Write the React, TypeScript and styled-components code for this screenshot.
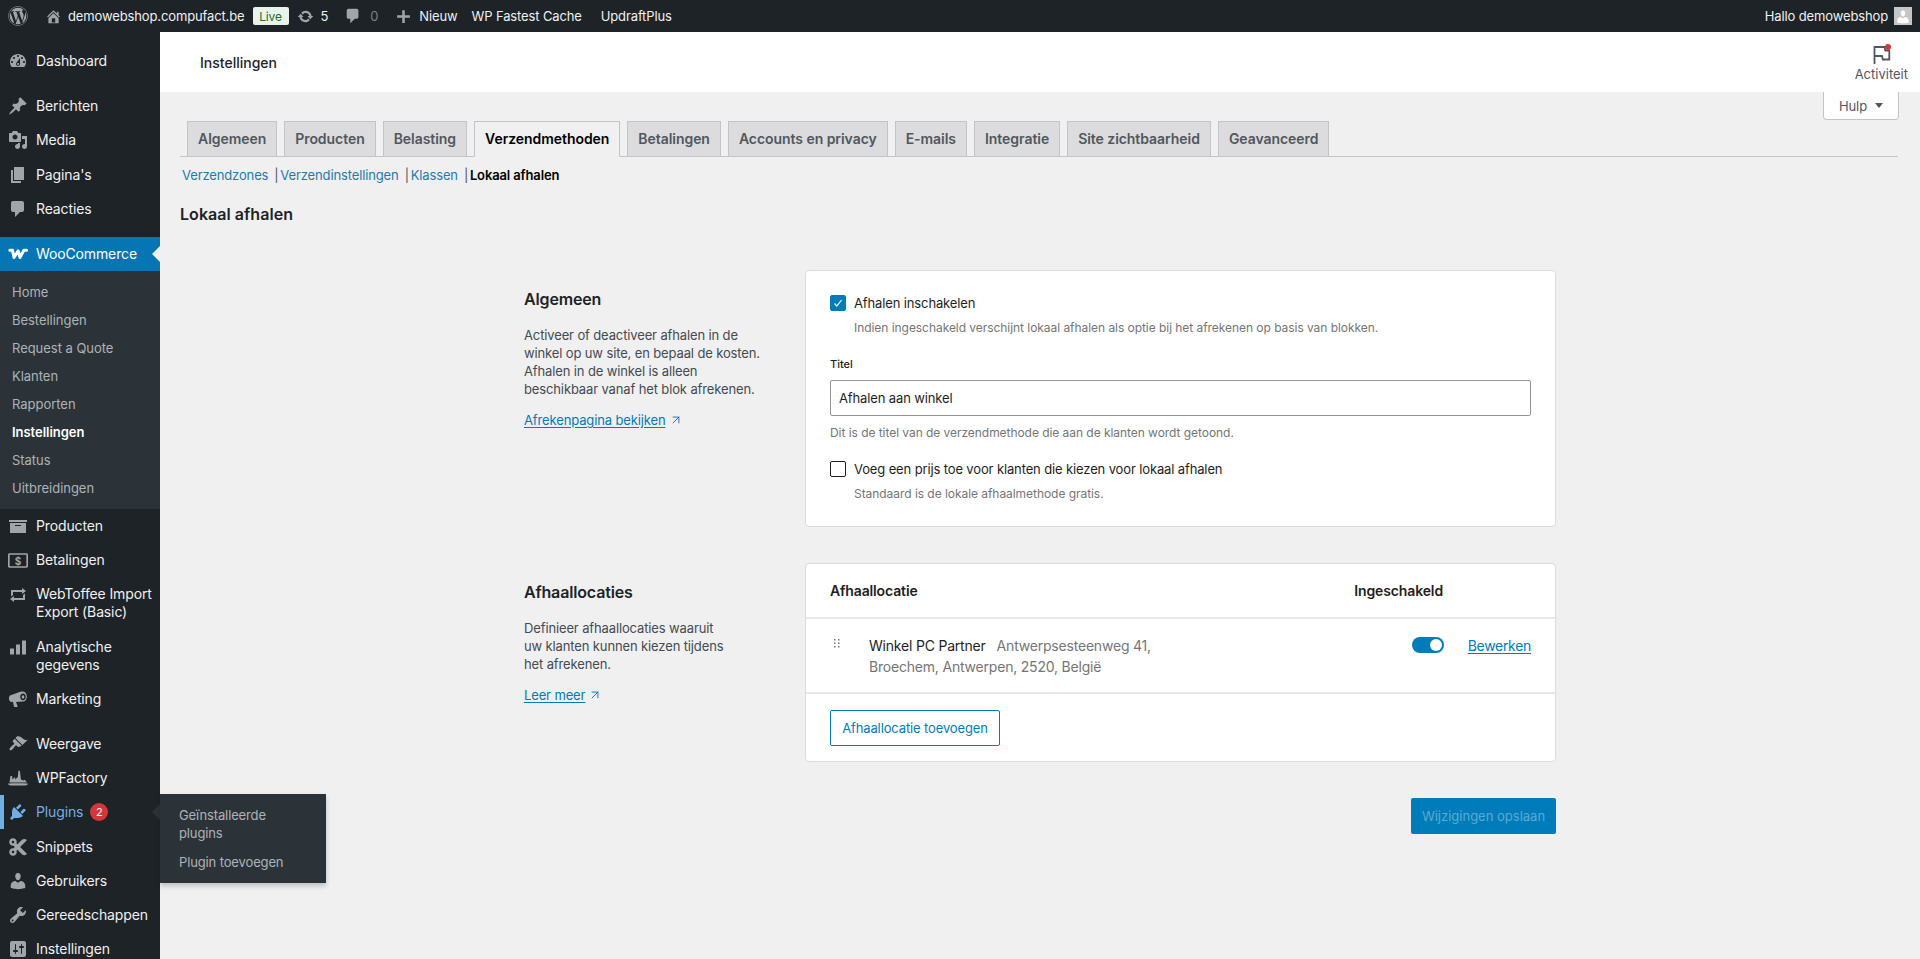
import { ReactNode } from "react";
import styled, { createGlobalStyle } from "styled-components";
import { FaWordpress, FaCut } from "react-icons/fa";
import { ArrowUpRight } from "lucide-react";

const GlobalStyle = createGlobalStyle`
  html, body {
    margin: 0;
    padding: 0;
    height: 100%;
    overflow: hidden;
    background: #f0f0f1;
  }
  body {
    font-family: Inter, "Liberation Sans", sans-serif;
    font-size: 13px;
    letter-spacing: -0.13px;
    color: #1d2327;
  }
  * { box-sizing: border-box; }
`;

const paths: Record<string, ReactNode> = {
  dashboard: (
    <path d="M3.76 16h12.48c1.1-1.37 1.76-3.11 1.76-5 0-4.42-3.58-8-8-8s-8 3.58-8 8c0 1.89.66 3.63 1.76 5zM10 4c.55 0 1 .45 1 1s-.45 1-1 1-1-.45-1-1 .45-1 1-1zM6 6c.55 0 1 .45 1 1s-.45 1-1 1-1-.45-1-1 .45-1 1-1zm8 0c.55 0 1 .45 1 1s-.45 1-1 1-1-.45-1-1 .45-1 1-1zm-5.37 5.55L12 7v6c0 1.1-.9 2-2 2s-2-.9-2-2c0-.57.24-1.08.63-1.45zM4 10c.55 0 1 .45 1 1s-.45 1-1 1-1-.45-1-1 .45-1 1-1zm12 0c.55 0 1 .45 1 1s-.45 1-1 1-1-.45-1-1 .45-1 1-1zm-5 3c0-.55-.45-1-1-1s-1 .45-1 1 .45 1 1 1 1-.45 1-1z" />
  ),
  post: (
    <path d="M10.44 3.02l1.82-1.82 6.36 6.35-1.83 1.82c-1.05-.68-2.48-.57-3.41.36l-.75.75c-.92.93-1.04 2.35-.35 3.41l-1.83 1.82-2.41-2.41-2.8 2.79c-.42.42-3.38 2.71-3.8 2.29s1.86-3.39 2.28-3.81l2.79-2.79L4.1 9.36l1.83-1.82c1.05.69 2.48.57 3.4-.36l.75-.75c.93-.92 1.05-2.35.36-3.41z" />
  ),
  media: (
    <path d="M13 11V4c0-.55-.45-1-1-1h-1.67L9 1H5L3.67 3H2c-.55 0-1 .45-1 1v7c0 .55.45 1 1 1h10c.55 0 1-.45 1-1zM7 4.5c1.38 0 2.5 1.12 2.5 2.5S8.38 9.5 7 9.5 4.5 8.38 4.5 7 5.62 4.5 7 4.5zM14 6h5v10.5c0 1.38-1.12 2.5-2.5 2.5S14 17.88 14 16.5s1.12-2.5 2.5-2.5c.17 0 .34.02.5.05V9h-3V6zm-4 8.05V13h2v3.5c0 1.38-1.12 2.5-2.5 2.5S7 17.88 7 16.5 8.12 14 9.5 14c.17 0 .34.02.5.05z" />
  ),
  page: <path d="M6 15V2h10v13H6zm-1 1h8v2H3V5h2v11z" />,
  comment: (
    <path d="M5 2h9c1.1 0 2 .9 2 2v7c0 1.1-.9 2-2 2h-2l-5 5v-5H5c-1.1 0-2-.9-2-2V4c0-1.1.9-2 2-2z" />
  ),
  archive: <path d="M19 4v2H1V4h18zM2 7h16v10H2V7zm11 3V9H7v1h6z" />,
  money: (
    <>
      <rect x="0.8" y="4" width="18.4" height="13" rx="1" fill="none" stroke="currentColor" strokeWidth="1.7" />
      <text x="10" y="14.500" textAnchor="middle" fontSize="10" fontWeight="700" fontFamily="Inter, sans-serif">
        $
      </text>
    </>
  ),
  repeat: (
    <path d="M5 7v3l-2 1.5V5h11V3l4 3.01L14 9V7H5zm10 6v-3l2-1.5V15H6v2l-4-3.01L6 11v2h9z" />
  ),
  chart: <path d="M18 2.5v14h-4v-14h4zm-6 4v10H8v-10h4zm-6 4v6H2v-6h4z" />,
  megaphone: (
    <path d="M13.6 2.6c2.7-.7 5 1.4 5.2 4.6.2 2.9-1.6 5.3-4 5.4l-6.8.3 1.6 4.3c.1.4-.1.7-.5.7H6.6c-.4 0-.6-.2-.7-.6l-.9-4.5-1.3.1C2 12.9.9 11.400.9 9.500c0-1.900 1-3.300 2.500-3.500l8.100-3zM15 4.600c-1.600 0-2.800 1.500-2.800 3.400s1.200 3.200 2.800 3.200 2.800-1.400 2.800-3.300-1.200-3.300-2.800-3.300zm0 1.700c.8 0 1.300.8 1.300 1.700s-.5 1.600-1.300 1.600-1.300-.7-1.300-1.600.5-1.700 1.300-1.700z" />
  ),
  brush: (
    <path d="M14.48 11.06L7.41 3.99l1.5-1.5c.5-.56 2.3-.47 3.51.32 1.21.8 1.43 1.28 2.91 2.1 1.18.64 2.45 1.26 4.45.85zm-.71.71L6.7 4.7 4.93 6.47c-.39.39-.39 1.02 0 1.41l1.06 1.06c.39.39.39 1.03 0 1.42-.6.6-1.43 1.11-2.21 1.69-.35.26-.7.53-1.01.84-1.43 1.43-1.4 2.52-.99 3.01.49.41 1.58.44 3.01-.99.31-.31.58-.66.84-1.01.58-.78 1.09-1.61 1.69-2.21.39-.39 1.03-.39 1.42 0l1.06 1.06c.39.39 1.02.39 1.41 0z" />
  ),
  factory: (
    <path d="M0 15.600c3-.6 17-.6 20 0-.3 1.400-1.500 1.900-2.500 1.900h-15c-1 0-2.200-.5-2.500-1.900zM1.500 14.600l.9-6.600h1.700l.4 3.300 2.700-2.200v2.300l2.600-2.300.6-6.300h1.500l1 8.600 2.600 1.100 1.300-.7 2.200 2.800z" />
  ),
  plugin: (
    <path d="M13.11 4.360L9.870 7.600 8 5.730l3.240-3.240c.35-.34 1.050-.2 1.560.32.52.51.66 1.210.31 1.550zm-8 1.770l.91-1.120 9.010 9.010-1.190.84c-.71.71-2.630 1.160-3.820 1.160H6.140L4.900 17.260c-.59.59-1.540.59-2.120 0-.59-.58-.59-1.530 0-2.120l1.240-1.240v-3.880c0-1.130.4-3.190 1.090-3.890zm7.260 3.970l3.240-3.240c.34-.35 1.040-.21 1.550.31.52.51.66 1.210.31 1.550l-3.240 3.250z" />
  ),
  users: (
    <path d="M10 9.250c-2.270 0-2.730-3.440-2.730-3.440C7 4.020 7.820 2 9.970 2c2.160 0 2.980 2.020 2.710 3.810 0 0-.41 3.440-2.680 3.440zm0 2.570L12.720 10c2.390 0 4.520 2.330 4.520 4.530v2.490s-3.650 1.130-7.240 1.130c-3.650 0-7.240-1.130-7.240-1.130v-2.490c0-2.250 1.940-4.480 4.470-4.480z" />
  ),
  tools: (
    <path d="M16.680 9.770c-1.340 1.340-3.300 1.670-4.950.99l-5.410 6.520c-.99.99-2.590.99-3.580 0s-.99-2.590 0-3.570l6.520-5.420c-.68-1.650-.35-3.610.99-4.950 1.280-1.280 3.120-1.620 4.720-1.060l-2.890 2.890 2.820 2.820 2.860-2.870c.53 1.580.18 3.390-1.080 4.650zM3.810 16.210c.4.39 1.040.39 1.430 0 .4-.4.4-1.040 0-1.430-.39-.4-1.030-.4-1.430 0-.39.39-.39 1.030 0 1.430z" />
  ),
  settings: (
    <path d="M18 16V4c0-1.100-.9-2-2-2H4c-1.100 0-2 .9-2 2v12c0 1.100.9 2 2 2h12c1.100 0 2-.9 2-2zM8 11h1c.55 0 1 .45 1 1s-.45 1-1 1H8v1.500c0 .28-.22.5-.5.5s-.5-.22-.5-.5V13H6c-.55 0-1-.45-1-1s.45-1 1-1h1V5.500c0-.28.22-.5.5-.5s.5.22.5.5V11zm5-2h-1c-.55 0-1-.45-1-1s.45-1 1-1h1V5.500c0-.28.22-.5.5-.5s.5.22.5.5V7h1c.55 0 1 .45 1 1s-.45 1-1 1h-1v5.500c0 .28-.22.5-.5.5s-.5-.22-.5-.5V9z" />
  ),
  home: (
    <path d="M16 8.500l1.530 1.530-1.060 1.060L10 4.620l-6.470 6.470-1.060-1.060L10 2.500l4 4v-2h2v4zm-6-2.460l6 5.990V18H4v-5.970zM12 17v-5H8v5h4z" />
  ),
  update: (
    <path d="M10.200 3.280c3.530 0 6.430 2.610 6.920 6h2.080l-3.500 4-3.500-4h2.320c-.45-1.970-2.210-3.450-4.320-3.450-1.450 0-2.730.71-3.540 1.780L4.950 5.660C6.230 4.200 8.110 3.280 10.200 3.280zm-.4 13.440c-3.520 0-6.430-2.610-6.920-6H.8l3.500-4c1.170 1.330 2.330 2.670 3.500 4H5.480c.45 1.970 2.210 3.450 4.320 3.450 1.450 0 2.730-.71 3.540-1.780l1.710 1.950c-1.280 1.460-3.150 2.380-5.250 2.380z" />
  ),
  plus: <path d="M17.500 8.500v3h-6v6h-3v-6h-6v-3h6v-6h3v6h6z" />,
  woo: (
    <path
      d="M1.800 6.300h2.700l1.500 7.200 4.200-6.600 1.700 6.600 4-7.200h2.600"
      fill="none"
      stroke="currentColor"
      strokeWidth="3"
      strokeLinejoin="round"
      strokeLinecap="round"
    />
  ),
};

const Icon = styled.svg.attrs({ viewBox: "0 0 20 20" })<{ $size?: number }>`
  width: ${(p) => p.$size ?? 20}px;
  height: ${(p) => p.$size ?? 20}px;
  fill: currentColor;
  flex-shrink: 0;
`;

/* admin bar */

const Shell = styled.div`
  height: 100vh;
  display: flex;
  flex-direction: column;
  overflow: hidden;
`;

const AdminBar = styled.header`
  height: 32px;
  flex-shrink: 0;
  background: #1d2327;
  color: #f0f0f1;
  display: flex;
  align-items: center;
  padding: 0 8px;
  font-size: 13px;
  z-index: 3;
`;

const BarIcon = styled.span<{ $left: number }>`
  display: flex;
  color: #a0a5aa;
  margin-left: ${(p) => p.$left}px;
`;

const BarText = styled.span<{ $left: number; $dim?: boolean }>`
  margin-left: ${(p) => p.$left}px;
  color: ${(p) => (p.$dim ? "#7b8085" : "#f0f0f1")};
  white-space: nowrap;
`;

const LiveBadge = styled.span`
  margin-left: 8px;
  width: 36px;
  height: 18px;
  display: flex;
  align-items: center;
  justify-content: center;
  border-radius: 2px;
  background: #e8f3ea;
  color: #1f6b32;
  font-size: 12px;
`;

const BarSpacer = styled.div`
  flex: 1;
`;

const Avatar = styled.span`
  width: 18px;
  height: 18px;
  margin: 0 0 0 6px;
  background: #c4c6c8;
  color: #fff;
  display: flex;
  align-items: flex-end;
  justify-content: center;
`;

/* sidebar */

const Body = styled.div`
  flex: 1;
  display: flex;
  min-height: 0;
`;

const Sidebar = styled.nav`
  width: 160px;
  flex-shrink: 0;
  background: #1d2327;
  padding-top: 12px;
  display: flex;
  flex-direction: column;
  z-index: 2;
`;

const NavRow = styled.div<{ $active?: boolean; $current?: boolean; $gap?: number; $tall?: boolean }>`
  position: relative;
  display: flex;
  align-items: ${(p) => (p.$tall ? "flex-start" : "center")};
  flex-shrink: 0;
  min-height: 34px;
  padding: ${(p) => (p.$tall ? "8px 8px 8.5px 8px" : "0 8px")};
  margin-top: ${(p) => p.$gap ?? 0}px;
  background: ${(p) => (p.$active ? "#0675b4" : "transparent")};
  color: ${(p) => (p.$active ? "#fff" : p.$current ? "#72aee6" : "#f0f0f1")};
  font-size: 14px;
  line-height: 18px;
  box-shadow: ${(p) => (p.$current ? "inset 4px 0 0 #72aee6" : "none")};

  & > svg {
    color: ${(p) => (p.$active ? "#fff" : p.$current ? "#72aee6" : "#a0a5aa")};
  }
`;

const NavLabel = styled.span`
  margin-left: 8px;
`;

const CurrentArrow = styled.span<{ $color: string }>`
  position: absolute;
  right: 0;
  top: 50%;
  margin-top: -8px;
  border: 8px solid transparent;
  border-left-width: 0;
  border-right-color: ${(p) => p.$color};
`;

const CountBadge = styled.span`
  width: 18px;
  height: 18px;
  margin-left: 7px;
  border-radius: 50%;
  background: #d63638;
  color: #fff;
  font-size: 11px;
  line-height: 18px;
  text-align: center;
`;

const SubMenu = styled.div`
  background: #2c3338;
  padding: 7px 0;
  flex-shrink: 0;
`;

const SubItem = styled.div<{ $active?: boolean }>`
  height: 28px;
  padding-left: 12px;
  display: flex;
  align-items: center;
  letter-spacing: -0.03px;
  color: ${(p) => (p.$active ? "#fff" : "rgba(240, 246, 252, 0.66)")};
  font-weight: ${(p) => (p.$active ? 600 : 400)};
`;

const Flyout = styled.div`
  position: absolute;
  left: 160px;
  top: -1px;
  width: 166px;
  padding: 12px 19px;
  display: flex;
  flex-direction: column;
  gap: 11px;
  background: #2c3338;
  font-size: 13px;
  color: rgba(240, 246, 252, 0.66);
  box-shadow: 0 3px 5px rgba(0, 0, 0, 0.2);
`;

/* main */

const Main = styled.main`
  flex: 1;
  min-width: 0;
  display: flex;
  flex-direction: column;
`;

const PageHeader = styled.div`
  height: 60px;
  flex-shrink: 0;
  background: #fff;
  padding: 0 12px 0 40px;
  display: flex;
  align-items: center;
  justify-content: space-between;
`;

const PageTitle = styled.h1`
  margin: 0;
  font-size: 14px;
  font-weight: 500;
  letter-spacing: 0;
  color: #1d2327;
`;

const Activity = styled.div`
  display: flex;
  flex-direction: column;
  align-items: center;
  font-size: 13px;
  line-height: 16px;
  letter-spacing: 0;
  color: #50575e;
`;

const MetaRow = styled.div`
  height: 28px;
  padding-right: 21px;
  display: flex;
  justify-content: flex-end;
`;

const HelpButton = styled.div`
  width: 76px;
  background: #fff;
  border: 1px solid #c3c4c7;
  border-top: 0;
  border-radius: 0 0 4px 4px;
  display: flex;
  align-items: center;
  justify-content: center;
  gap: 8px;
  color: #50575e;
`;

const Caret = styled.span`
  border: 4.5px solid transparent;
  border-top: 5px solid #50575e;
  border-bottom: 0;
`;

const Content = styled.div`
  padding: 1px 20px 0;
`;

const Tabs = styled.div`
  display: flex;
  gap: 7px;
  padding-left: 7px;
  margin-right: 2px;
  border-bottom: 1px solid #c3c4c7;
  height: 36px;
`;

const Tab = styled.div<{ $active?: boolean }>`
  height: 36px;
  padding: 5px 10px;
  border: 1px solid #c3c4c7;
  border-bottom-color: ${(p) => (p.$active ? "#f0f0f1" : "#c3c4c7")};
  background: ${(p) => (p.$active ? "#f0f0f1" : "#dcdcde")};
  color: ${(p) => (p.$active ? "#000" : "#50575e")};
  font-size: 14px;
  font-weight: 600;
  letter-spacing: -0.05px;
  line-height: 24px;
  white-space: nowrap;
`;

const SubNav = styled.div`
  margin: 9px 0 0 2px;
  display: flex;
  align-items: center;
  line-height: 18px;
  color: #50575e;
`;

const SubLink = styled.span`
  color: #1f7ab0;
`;

const Separator = styled.span`
  margin: 0 2px 0 6px;
  color: #50575e;
  width: 4px;
`;

const SubCurrent = styled.span`
  color: #000;
  font-weight: 600;
`;

const Heading = styled.h2`
  margin: 18px 0 0;
  font-size: 16px;
  font-weight: 600;
  letter-spacing: 0.05px;
  line-height: 24px;
  color: #1d2327;
`;

const Center = styled.div`
  width: 1032px;
  margin: 44px 0 0 344px;
  display: flex;
  flex-direction: column;
`;

const Section = styled.section`
  display: grid;
  grid-template-columns: 281px 751px;
  margin-bottom: 36px;
`;

const Intro = styled.div`
  padding-top: 17px;
`;

const IntroTitle = styled.h3`
  margin: 0;
  font-size: 16px;
  font-weight: 600;
  letter-spacing: -0.15px;
  line-height: 24px;
  color: #1d2327;
`;

const IntroText = styled.p`
  margin: 15px 0 13px;
  line-height: 18px;
  color: #444b52;
`;

const ExternalLink = styled.span`
  display: inline-flex;
  align-items: center;
  gap: 3px;
  line-height: 18px;
  color: #007cba;

  & > u {
    text-underline-offset: 2px;
  }
`;

const Card = styled.div`
  background: #fff;
  border: 1px solid #dcdcde;
  border-radius: 4px;
`;

const Form = styled.div`
  padding: 24px 24px 24px;
`;

const CheckRow = styled.div<{ $top?: number }>`
  display: flex;
  align-items: center;
  gap: 8px;
  height: 16px;
  margin-top: ${(p) => p.$top ?? 0}px;
  color: #1e1e1e;
`;

const Box = styled.span<{ $checked?: boolean }>`
  width: 16px;
  height: 16px;
  display: flex;
  border-radius: 2px;
  border: 1px solid ${(p) => (p.$checked ? "#007cba" : "#1e1e1e")};
  background: ${(p) => (p.$checked ? "#007cba" : "#fff")};
`;

const Help = styled.div<{ $indent?: boolean }>`
  margin-top: 9px;
  margin-left: ${(p) => (p.$indent ? "24px" : "0")};
  font-size: 12px;
  letter-spacing: -0.05px;
  line-height: 16px;
  color: #757575;
`;

const FieldLabel = styled.div`
  margin-top: 20px;
  font-size: 11px;
  font-weight: 500;
  letter-spacing: 0;
  line-height: 16px;
  color: #1e1e1e;
`;

const TextInput = styled.div`
  margin-top: 8px;
  height: 36px;
  padding: 0 8px;
  display: flex;
  align-items: center;
  border: 1px solid #949494;
  border-radius: 2px;
  color: #1e1e1e;
`;

const TableHead = styled.div`
  height: 53px;
  padding: 0 112px 0 24px;
  display: flex;
  align-items: center;
  justify-content: space-between;
  font-size: 14px;
  font-weight: 600;
  color: #1e1e1e;
`;

const LocationRow = styled.div`
  height: 77px;
  border-top: 2px solid #e8e8e8;
  border-bottom: 2px solid #e8e8e8;
  padding: 16px 24px 0 28px;
  display: flex;
  align-items: flex-start;
  font-size: 14px;
`;

const Handle = styled.svg`
  width: 6px;
  height: 9px;
  margin-top: 4px;
  flex-shrink: 0;
  fill: #757575;
`;

const LocationText = styled.div`
  margin-left: 29px;
  flex: 1;
  line-height: 21px;
  letter-spacing: -0.2px;
  color: #757575;
`;

const LocationName = styled.span`
  color: #1e1e1e;
  margin-right: 11px;
`;

const Toggle = styled.span`
  width: 32px;
  height: 16px;
  margin-top: 2px;
  padding: 2px;
  border-radius: 8px;
  background: #007cba;
  display: flex;
  justify-content: flex-end;
  flex-shrink: 0;

  &::after {
    content: "";
    width: 12px;
    height: 12px;
    border-radius: 50%;
    background: #fff;
  }
`;

const EditLink = styled.u`
  margin-left: 24px;
  line-height: 21px;
  letter-spacing: -0.3px;
  color: #007cba;
  text-underline-offset: 2px;
`;

const TableFoot = styled.div`
  padding: 16px 24px 15px;
`;

const OutlineButton = styled.div`
  width: 170px;
  height: 36px;
  display: flex;
  align-items: center;
  justify-content: center;
  border: 1px solid #007cba;
  border-radius: 2px;
  color: #007cba;
`;

const SaveRow = styled.div`
  display: flex;
  justify-content: flex-end;
`;

const SaveButton = styled.div`
  width: 145px;
  height: 36px;
  display: flex;
  align-items: center;
  justify-content: center;
  border-radius: 2px;
  letter-spacing: 0;
  background: #007cba;
  color: rgba(255, 255, 255, 0.36);
`;

const topLinks = ["WP Fastest Cache", "UpdraftPlus"];
const tabs = [
  "Algemeen",
  "Producten",
  "Belasting",
  "Verzendmethoden",
  "Betalingen",
  "Accounts en privacy",
  "E-mails",
  "Integratie",
  "Site zichtbaarheid",
  "Geavanceerd",
];
const wooItems = [
  "Home",
  "Bestellingen",
  "Request a Quote",
  "Klanten",
  "Rapporten",
  "Instellingen",
  "Status",
  "Uitbreidingen",
];

function NavItem(props: {
  icon: string;
  label: ReactNode;
  gap?: number;
  tall?: boolean;
  children?: ReactNode;
}) {
  return (
    <NavRow $gap={props.gap} $tall={props.tall}>
      <Icon>{paths[props.icon]}</Icon>
      <NavLabel>{props.label}</NavLabel>
      {props.children}
    </NavRow>
  );
}

export default function App() {
  return (
    <Shell>
      <GlobalStyle />
      <AdminBar>
        <BarIcon $left={0}>
          <FaWordpress size={20} />
        </BarIcon>
        <BarIcon $left={17}>
          <Icon $size={17}>{paths.home}</Icon>
        </BarIcon>
        <BarText $left={6}>demowebshop.compufact.be</BarText>
        <LiveBadge>Live</LiveBadge>
        <BarIcon $left={8}>
          <Icon $size={17}>{paths.update}</Icon>
        </BarIcon>
        <BarText $left={7}>5</BarText>
        <BarIcon $left={16}>
          <Icon $size={18}>{paths.comment}</Icon>
        </BarIcon>
        <BarText $left={8} $dim>
          0
        </BarText>
        <BarIcon $left={17}>
          <Icon $size={17}>{paths.plus}</Icon>
        </BarIcon>
        <BarText $left={7}>Nieuw</BarText>
        {topLinks.map((name, i) => (
          <BarText key={name} $left={i === 0 ? 14 : 19}>
            {name}
          </BarText>
        ))}
        <BarSpacer />
        <BarText $left={0}>Hallo demowebshop</BarText>
        <Avatar>
          <Icon $size={16}>{paths.users}</Icon>
        </Avatar>
      </AdminBar>

      <Body>
        <Sidebar>
          <NavItem icon="dashboard" label="Dashboard" />
          <NavItem icon="post" label="Berichten" gap={11} />
          <NavItem icon="media" label="Media" />
          <NavItem icon="page" label="Pagina's" gap={1} />
          <NavItem icon="comment" label="Reacties" />
          <NavRow $active $gap={11}>
            <Icon>{paths.woo}</Icon>
            <NavLabel>WooCommerce</NavLabel>
            <CurrentArrow $color="#f0f0f1" />
          </NavRow>
          <SubMenu>
            {wooItems.map((item) => (
              <SubItem key={item} $active={item === "Instellingen"}>
                {item}
              </SubItem>
            ))}
          </SubMenu>
          <NavItem icon="archive" label="Producten" />
          <NavItem icon="money" label="Betalingen" />
          <NavItem
            icon="repeat"
            tall
            label={
              <>
                WebToffee Import
                <br />
                Export (Basic)
              </>
            }
          />
          <NavItem
            icon="chart"
            tall
            label={
              <>
                Analytische
                <br />
                gegevens
              </>
            }
          />
          <NavItem icon="megaphone" label="Marketing" />
          <NavItem icon="brush" label="Weergave" gap={11} />
          <NavItem icon="factory" label="WPFactory" />
          <NavRow $current>
            <Icon>{paths.plugin}</Icon>
            <NavLabel>Plugins</NavLabel>
            <CountBadge>2</CountBadge>
            <CurrentArrow $color="#2c3338" />
            <Flyout>
              <span>Geïnstalleerde plugins</span>
              <span>Plugin toevoegen</span>
            </Flyout>
          </NavRow>
          <NavRow $gap={1}>
            <FaCut size={20} />
            <NavLabel>Snippets</NavLabel>
          </NavRow>
          <NavItem icon="users" label="Gebruikers" />
          <NavItem icon="tools" label="Gereedschappen" />
          <NavItem icon="settings" label="Instellingen" />
        </Sidebar>

        <Main>
          <PageHeader>
            <PageTitle>Instellingen</PageTitle>
            <Activity>
              <svg width="24" height="24" viewBox="0 0 24 24" fill="none">
                <path
                  d="M5.500 22V5h10l.8 3.500h4v9h-6.500l-.8-3.500H5.500"
                  stroke="#50575e"
                  strokeWidth="1.8"
                />
                <circle cx="19" cy="5" r="3" fill="#d63638" />
              </svg>
              Activiteit
            </Activity>
          </PageHeader>
          <MetaRow>
            <HelpButton>
              Hulp
              <Caret />
            </HelpButton>
          </MetaRow>
          <Content>
            <Tabs>
              {tabs.map((tab) => (
                <Tab key={tab} $active={tab === "Verzendmethoden"}>
                  {tab}
                </Tab>
              ))}
            </Tabs>
            <SubNav>
              <SubLink>Verzendzones</SubLink>
              <Separator>|</Separator>
              <SubLink>Verzendinstellingen</SubLink>
              <Separator>|</Separator>
              <SubLink>Klassen</SubLink>
              <Separator>|</Separator>
              <SubCurrent>Lokaal afhalen</SubCurrent>
            </SubNav>
            <Heading>Lokaal afhalen</Heading>

            <Center>
              <Section>
                <Intro>
                  <IntroTitle>Algemeen</IntroTitle>
                  <IntroText>
                    Activeer of deactiveer afhalen in de
                    <br />
                    winkel op uw site, en bepaal de kosten.
                    <br />
                    Afhalen in de winkel is alleen
                    <br />
                    beschikbaar vanaf het blok afrekenen.
                  </IntroText>
                  <ExternalLink>
                    <u>Afrekenpagina bekijken</u>
                    <ArrowUpRight size={14} strokeWidth={1.6} />
                  </ExternalLink>
                </Intro>
                <Card>
                  <Form>
                    <CheckRow>
                      <Box $checked>
                        <svg width="14" height="14" viewBox="0 0 14 14" fill="none">
                          <path d="M3.500 7.500l2.300 2.500 4.700-6" stroke="#fff" strokeWidth="1.200" />
                        </svg>
                      </Box>
                      Afhalen inschakelen
                    </CheckRow>
                    <Help $indent>
                      Indien ingeschakeld verschijnt lokaal afhalen als optie bij het afrekenen op basis van blokken.
                    </Help>
                    <FieldLabel>Titel</FieldLabel>
                    <TextInput>Afhalen aan winkel</TextInput>
                    <Help>Dit is de titel van de verzendmethode die aan de klanten wordt getoond.</Help>
                    <CheckRow $top={20}>
                      <Box />
                      Voeg een prijs toe voor klanten die kiezen voor lokaal afhalen
                    </CheckRow>
                    <Help $indent>Standaard is de lokale afhaalmethode gratis.</Help>
                  </Form>
                </Card>
              </Section>

              <Section>
                <Intro>
                  <IntroTitle>Afhaallocaties</IntroTitle>
                  <IntroText>
                    Definieer afhaallocaties waaruit
                    <br />
                    uw klanten kunnen kiezen tijdens
                    <br />
                    het afrekenen.
                  </IntroText>
                  <ExternalLink>
                    <u>Leer meer</u>
                    <ArrowUpRight size={14} strokeWidth={1.6} />
                  </ExternalLink>
                </Intro>
                <Card>
                  <TableHead>
                    <span>Afhaallocatie</span>
                    <span>Ingeschakeld</span>
                  </TableHead>
                  <LocationRow>
                    <Handle viewBox="0 0 6 9">
                      <rect x="0" y="0" width="1.500" height="1.500" />
                      <rect x="4" y="0" width="1.500" height="1.500" />
                      <rect x="0" y="3.500" width="1.500" height="1.500" />
                      <rect x="4" y="3.500" width="1.500" height="1.500" />
                      <rect x="0" y="7" width="1.500" height="1.500" />
                      <rect x="4" y="7" width="1.500" height="1.500" />
                    </Handle>
                    <LocationText>
                      <LocationName>Winkel PC Partner</LocationName>
                      Antwerpsesteenweg 41,
                      <br />
                      Broechem, Antwerpen, 2520, België
                    </LocationText>
                    <Toggle />
                    <EditLink>Bewerken</EditLink>
                  </LocationRow>
                  <TableFoot>
                    <OutlineButton>Afhaallocatie toevoegen</OutlineButton>
                  </TableFoot>
                </Card>
              </Section>

              <SaveRow>
                <SaveButton>Wijzigingen opslaan</SaveButton>
              </SaveRow>
            </Center>
          </Content>
        </Main>
      </Body>
    </Shell>
  );
}
